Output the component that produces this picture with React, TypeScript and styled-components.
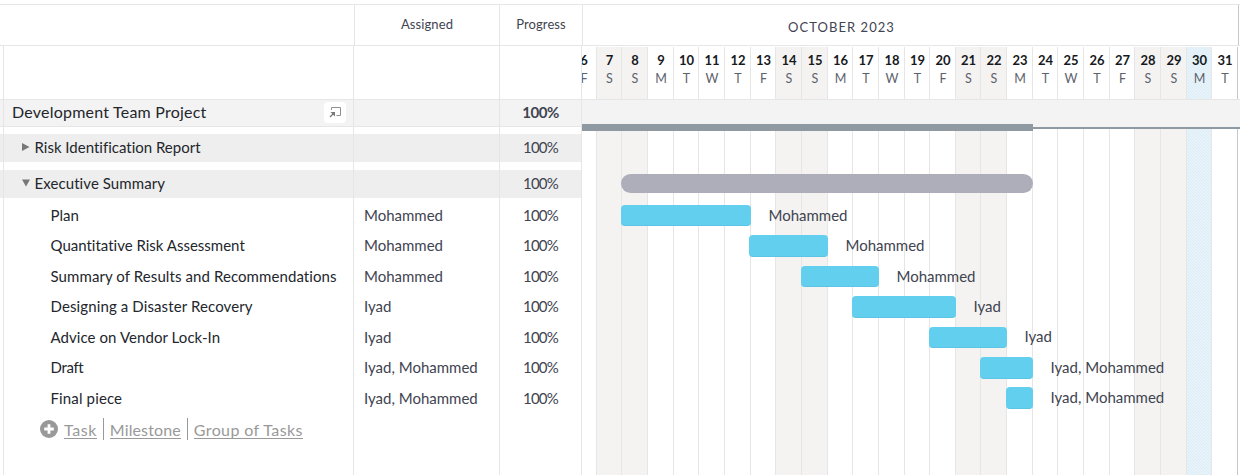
import React from "react";
import styled, { createGlobalStyle } from "styled-components";

const FIRST_EDGE = 596.2;
const DAY_WIDTH = 25.65;
const CHART_LEFT = 582;
const dayEdge = (day: number) => Math.floor(FIRST_EDGE + (day - 7) * DAY_WIDTH);

const LETTERS = ["S", "M", "T", "W", "T", "F", "S"];
const DAYS = Array.from({ length: 26 }, (_, i) => {
  const n = i + 6;
  const weekday = n % 7;
  return { n, letter: LETTERS[(weekday + 6) % 7], weekend: weekday === 0 || weekday === 1, today: n === 30 };
});

type Task = { name: string; who: string; from: number; to: number; height: number; bar: number; spacing: number; lift?: number };
const TASKS: Task[] = [
  { name: "Plan", who: "Mohammed", from: 621, to: 751, height: 30, bar: 21, spacing: 0 },
  { name: "Quantitative Risk Assessment", who: "Mohammed", from: 749, to: 828, height: 31, bar: 22, spacing: 0 },
  { name: "Summary of Results and Recommendations", who: "Mohammed", from: 801, to: 879, height: 30, bar: 21, spacing: 0.09 },
  { name: "Designing a Disaster Recovery", who: "Iyad", from: 852, to: 956, height: 31, bar: 22, spacing: 0.12 },
  { name: "Advice on Vendor Lock-In", who: "Iyad", from: 929, to: 1007, height: 30, bar: 21, spacing: 0.07, lift: 1 },
  { name: "Draft", who: "Iyad, Mohammed", from: 980, to: 1033, height: 31, bar: 22, spacing: -0.35 },
  { name: "Final piece", who: "Iyad, Mohammed", from: 1006, to: 1033, height: 30, bar: 22, spacing: 0.14, lift: 1 },
];

const GlobalStyle = createGlobalStyle`
  * { box-sizing: border-box; }
  body {
    margin: 0;
    background: #fff;
    color: #23262c;
    font-family: Lato, "Open Sans", sans-serif;
    font-variant-ligatures: none;
    overflow: hidden;
  }
`;

const Page = styled.div`
  width: 1240px;
  height: 475px;
  padding-top: 4px;
  display: flex;
  flex-direction: column;
  overflow: hidden;
`;

const Header = styled.header`
  display: grid;
  grid-template-columns: 354px 145px 83px 656px 2px;
  grid-template-rows: 40px;
  height: 42px;
  flex: none;
  border-top: 1px solid #e6e6e6;
  border-bottom: 1px solid #e6e6e6;
`;

const HeadCell = styled.div<{ $month?: boolean; $edge?: string }>`
  border-left: ${(p) => (p.$edge ? `1px solid ${p.$edge}` : "0")};
  text-align: center;
  white-space: nowrap;
  color: #3f4451;
  font-size: 13px;
  line-height: ${(p) => (p.$month ? 44 : 39)}px;
  letter-spacing: ${(p) => (p.$month ? "1.05px" : "0.1px")};
  padding-right: ${(p) => (p.$month ? "138px" : "0")};
`;

const Body = styled.main`
  display: grid;
  grid-template-columns: 582px 658px;
  flex: 1;
`;

const Sheet = styled.section`
  display: grid;
  grid-template-columns: 3px 350px 146px 82px 1px;
  grid-template-rows: 429px;
`;

const ColumnLine = styled.div<{ $column: number }>`
  grid-row: 1;
  grid-column: ${(p) => p.$column};
  border-left: 1px solid #e6e6e6;
`;

const Table = styled.div`
  grid-row: 1;
  grid-column: 1 / -1;
  padding-top: 53px;
  padding-right: 1px;
`;

const Row = styled.div<{ $kind?: "project" | "group"; $height: number; $gap?: number }>`
  display: grid;
  grid-template-columns: 353px 146px 82px;
  height: ${(p) => p.$height}px;
  align-items: start;
  padding-top: ${(p) => (p.$kind === "project" ? 2 : p.$kind === "group" ? 3 : 5)}px;
  margin-bottom: ${(p) => p.$gap ?? 0}px;
  border-top: ${(p) => (p.$kind === "project" ? "1px solid #e6e6e6" : "0")};
  border-bottom: ${(p) => (p.$kind === "project" ? "1px solid #e6e6e6" : "0")};
  background: ${(p) => (p.$kind === "project" ? "#f3f3f3" : p.$kind === "group" ? "#eeeeee" : "transparent")};
`;

const Name = styled.div<{ $indent: number; $size?: number; $spacing?: number }>`
  display: flex;
  align-items: center;
  height: 20px;
  padding-left: ${(p) => p.$indent}px;
  white-space: nowrap;
  font-size: ${(p) => p.$size ?? 15}px;
  letter-spacing: ${(p) => p.$spacing ?? 0}px;
  line-height: 20px;
`;

const Person = styled.div`
  padding-left: 11px;
  font-size: 15px;
  line-height: 20px;
  color: #3f4451;
`;

const Percent = styled.div<{ $bold?: boolean }>`
  padding-left: 1px;
  text-align: center;
  font-size: 15px;
  line-height: 20px;
  font-weight: ${(p) => (p.$bold ? 700 : 400)};
  letter-spacing: ${(p) => (p.$bold ? -0.5 : -0.75)}px;
  color: #3f4451;
`;

const OpenButton = styled.button`
  width: 22px;
  height: 21px;
  margin: 0 7px 0 auto;
  padding: 0;
  border: 0;
  border-radius: 4px;
  background: #fff;
  display: grid;
  place-items: center;
`;

const Arrow = styled.svg`
  flex: none;
  margin-right: 5px;
`;

const AddBar = styled.div`
  display: flex;
  align-items: center;
  height: 32px;
  padding-left: 40px;
  color: #999;
`;

const AddLink = styled.span<{ $spacing: number }>`
  margin: 2px 0 0 6px;
  font-size: 16px;
  line-height: 17px;
  letter-spacing: ${(p) => p.$spacing}px;
  border-bottom: 1px solid #999;
`;

const Divider = styled.span`
  width: 1px;
  height: 22px;
  margin-left: 6px;
  background: #999;
`;

const Chart = styled.section`
  display: grid;
  grid-template-columns: 658px;
  grid-template-rows: 429px;
  overflow: hidden;
`;

const Days = styled.div`
  grid-area: 1 / 1;
  display: flex;
  padding-top: 1px;
  margin-left: -12px;
`;

const Day = styled.div<{ $width: number; $weekend: boolean; $today: boolean }>`
  flex: none;
  width: ${(p) => p.$width}px;
  padding: 4px 0 0 1px;
  border-left: 1px solid #e6e6e6;
  text-align: center;
  background: ${(p) =>
    p.$today
      ? "repeating-linear-gradient(45deg, #d9ecf5 0 0.7px, #e8f4fa 0.7px 2.12px)"
      : p.$weekend
        ? "#f4f3f2"
        : "transparent"};
`;

const DayNumber = styled.div`
  height: 18px;
  font-size: 13px;
  font-weight: 700;
  line-height: 19px;
  color: #17191d;
`;

const DayLetter = styled.div`
  font-size: 12.5px;
  line-height: 19px;
  color: #5d626d;
`;

const LastEdge = styled.div`
  width: 1px;
  background: #c8c8c8;
`;

const Tracks = styled.div`
  grid-area: 1 / 1;
  padding-top: 53px;
`;

const ProjectTrack = styled.div`
  height: 32px;
  display: flex;
  align-items: flex-start;
  background: linear-gradient(#e6e6e6 0 1px, #f3f3f3 1px 28px, transparent 28px);
`;

const ProjectDone = styled.div`
  width: 451px;
  height: 7px;
  margin-top: 25px;
  background: #8e99a2;
`;

const ProjectRest = styled.div`
  flex: 1;
  height: 2px;
  margin-top: 28px;
  background: #8e99a2;
`;

const GroupBar = styled.div`
  width: 412px;
  height: 19px;
  margin: 43px 0 7px 39px;
  border-radius: 10px;
  background: #aeadba;
`;

const Track = styled.div<{ $height: number }>`
  display: flex;
  align-items: flex-start;
  height: ${(p) => p.$height}px;
  padding-top: 5px;
`;

const Bar = styled.div<{ $from: number; $to: number; $height: number; $raise: boolean }>`
  flex: none;
  width: ${(p) => p.$to - p.$from}px;
  height: ${(p) => p.$height}px;
  margin-left: ${(p) => p.$from - CHART_LEFT}px;
  margin-top: ${(p) => (p.$raise ? -1 : 0)}px;
  border-radius: 4px;
  background: #62cfee;
  border-bottom: 1px solid #5cc5e6;
`;

const BarLabel = styled.span<{ $lift: number }>`
  margin-left: 17.5px;
  margin-top: ${(p) => -p.$lift}px;
  font-size: 15px;
  line-height: 20px;
  white-space: nowrap;
  color: #3f4451;
`;

export default function App() {
  return (
    <Page>
      <GlobalStyle />
      <Header>
        <HeadCell />
        <HeadCell $edge="#e6e6e6">Assigned</HeadCell>
        <HeadCell $edge="#e6e6e6">Progress</HeadCell>
        <HeadCell $month $edge="#e6e6e6">OCTOBER 2023</HeadCell>
        <HeadCell $edge="#c8c8c8" />
      </Header>
      <Body>
        <Sheet>
          <Table>
            <Row $kind="project" $height={28} $gap={7}>
              <Name $indent={12} $size={16} $spacing={0.22}>
                Development Team Project
                <OpenButton aria-label="Open project">
                  <svg width="12" height="12" viewBox="0 0 12 12" fill="none">
                    <path d="M2.5 4V1.5H11.5V9.5H7.5" stroke="#8f8f8f" />
                    <path d="M1 11L4.5 7.5" stroke="#777" strokeWidth="1.3" />
                    <path d="M1.5 6H6V10.5Z" fill="#777" />
                  </svg>
                </OpenButton>
              </Name>
              <div />
              <Percent $bold>100%</Percent>
            </Row>
            <Row $kind="group" $height={28} $gap={8}>
              <Name $indent={22}>
                <Arrow width="7.5" height="8" viewBox="0 0 7.5 8"><path d="M0 0L7.5 4L0 8Z" fill="#777" /></Arrow>
                Risk Identification Report
              </Name>
              <div />
              <Percent>100%</Percent>
            </Row>
            <Row $kind="group" $height={28} $gap={2}>
              <Name $indent={21.5} $spacing={0.08}>
                <Arrow width="8" height="8" viewBox="0 0 8 8"><path d="M0 .5H8L4 7.5Z" fill="#777" /></Arrow>
                Executive Summary
              </Name>
              <div />
              <Percent>100%</Percent>
            </Row>
            {TASKS.map((t) => (
              <Row key={t.name} $height={t.height}>
                <Name $indent={50.5} $spacing={t.spacing}>{t.name}</Name>
                <Person>{t.who}</Person>
                <Percent>100%</Percent>
              </Row>
            ))}
            <AddBar>
              <svg width="18" height="18" viewBox="0 0 18 18">
                <circle cx="9" cy="9" r="9" fill="#999" />
                <path d="M9 4.2V13.8M4.2 9H13.8" stroke="#fff" strokeWidth="2.8" />
              </svg>
              <AddLink $spacing={0.55}>Task</AddLink>
              <Divider />
              <AddLink $spacing={0.12}>Milestone</AddLink>
              <Divider />
              <AddLink $spacing={0.4}>Group of Tasks</AddLink>
            </AddBar>
          </Table>
          <ColumnLine $column={2} />
          <ColumnLine $column={3} />
          <ColumnLine $column={4} />
          <ColumnLine $column={5} />
        </Sheet>
        <Chart>
          <Days>
            {DAYS.map((d) => (
              <Day key={d.n} $width={dayEdge(d.n + 1) - dayEdge(d.n)} $weekend={d.weekend} $today={d.today}>
                <DayNumber>{d.n}</DayNumber>
                <DayLetter>{d.letter}</DayLetter>
              </Day>
            ))}
            <LastEdge />
          </Days>
          <Tracks>
            <ProjectTrack>
              <ProjectDone />
              <ProjectRest />
            </ProjectTrack>
            <GroupBar />
            {TASKS.map((t, i) => (
              <Track key={t.name} $height={t.height}>
                <Bar $from={t.from} $to={t.to} $height={t.bar} $raise={i === TASKS.length - 1} />
                <BarLabel $lift={t.lift ?? 0}>{t.who}</BarLabel>
              </Track>
            ))}
          </Tracks>
        </Chart>
      </Body>
    </Page>
  );
}
